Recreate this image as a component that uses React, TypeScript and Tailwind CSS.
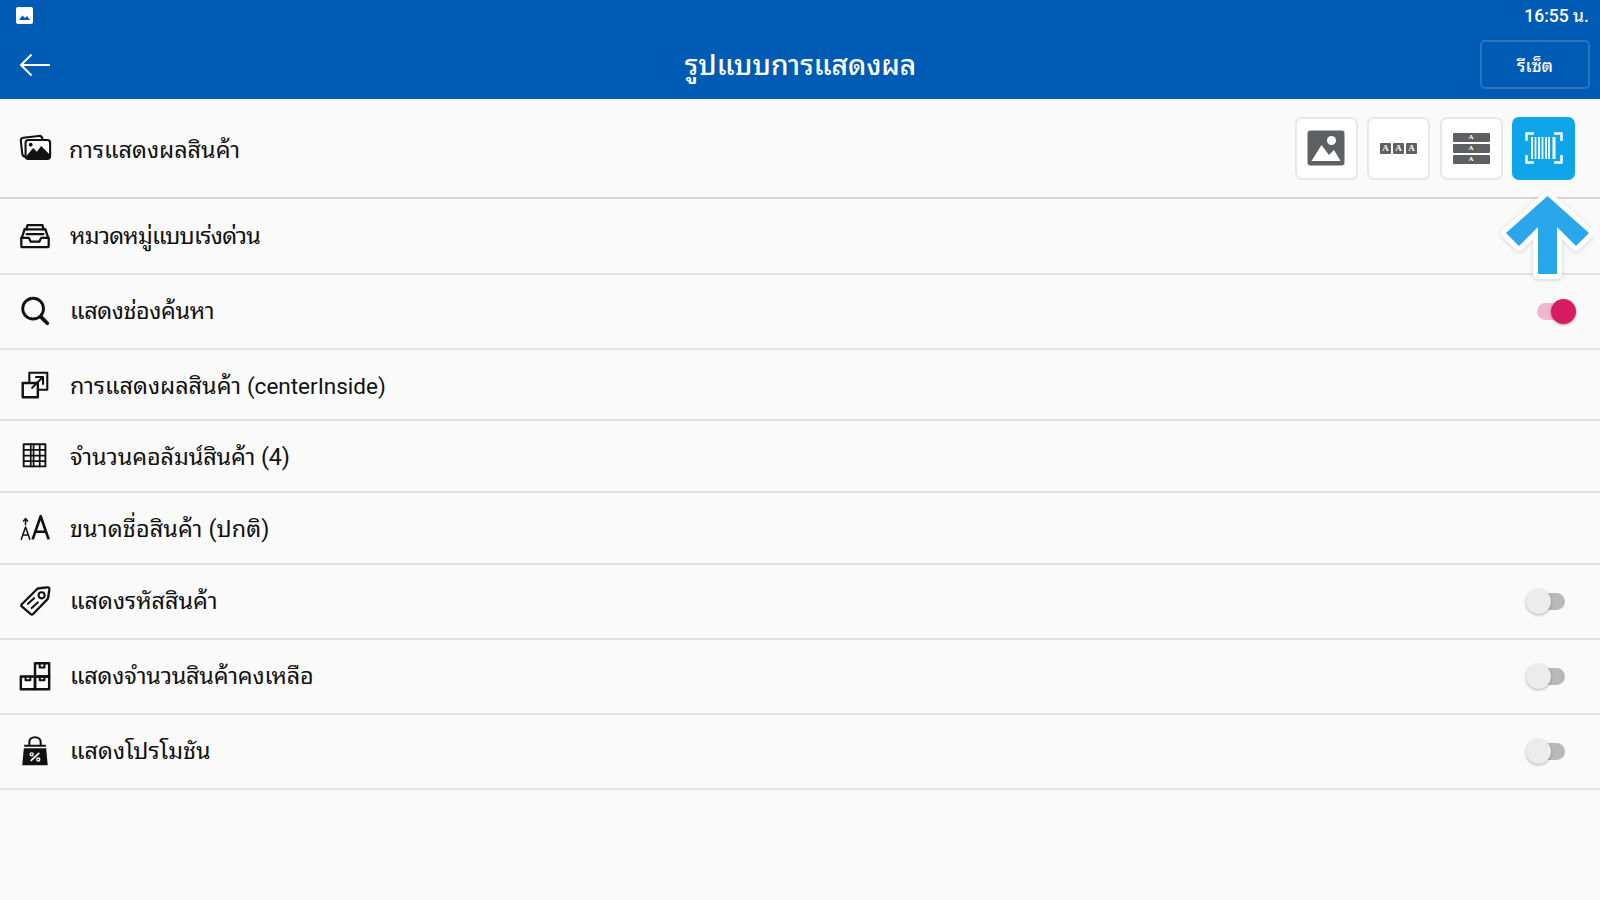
import { ReactNode } from "react";

const Ink = ({ children }: { children: ReactNode }) => (
  <svg className="mx-[1px]" width="34" height="34" viewBox="0 0 36 36" fill="none" stroke="#111" strokeWidth="2.2" strokeLinejoin="round" strokeLinecap="round">
    {children}
  </svg>
);

const GalleryIcon = () => (
  <Ink>
    <path d="M7.5 27.5 C5.5 27 4.8 26 4.5 24 L3 10.5 C2.8 8.5 3.8 7.4 5.5 7.2 L22 5.2 C24.5 5 25.5 6 26 8.5" />
    <rect x="8" y="9.5" width="26" height="20" rx="3" fill="#fafafa" />
    <path d="M8.5 27 L16 18 L20 22 L24.5 16 L33.5 25 V27 C33.5 28.5 32.5 30 31 30 H11 C9.5 30 8.5 28.5 8.5 27 Z" fill="#111" stroke="none" />
    <circle cx="13.5" cy="14.5" r="2" fill="#111" stroke="none" />
  </Ink>
);

const TrayIcon = () => (
  <Ink>
    <path d="M9 11 L10 6.5 H26 L27 11" strokeWidth="2.4" />
    <path d="M7 11 H29" strokeWidth="2.4" />
    <path d="M4 20 L7 11 M32 20 L29 11" strokeWidth="2.4" />
    <path d="M9 16 H27" strokeWidth="2.2" />
    <path d="M3.5 20 H11.5 L13.5 24 H22.5 L24.5 20 H32.5 V28 C32.5 29 31.8 29.8 31 29.8 H5 C4.2 29.8 3.5 29 3.5 28 Z" strokeWidth="2.4" />
  </Ink>
);

const SearchIcon = () => (
  <Ink>
    <circle cx="16" cy="15.5" r="11" strokeWidth="3" />
    <path d="M24 24 L31 31" strokeWidth="4" />
  </Ink>
);

const ResizeIcon = () => (
  <Ink>
    <path d="M12 17 V6 H31 V24 H21" strokeWidth="2.2" strokeLinecap="butt" />
    <rect x="5" y="17" width="16" height="15" strokeWidth="2.6" />
    <path d="M15 22 L26 11 M19 10.5 H26.5 V18" strokeWidth="2.2" />
  </Ink>
);

const GridIcon = () => (
  <Ink>
    <rect x="6" y="5.5" width="23" height="23.5" strokeWidth="2" />
    <path d="M13.5 5.5 V29 M16.5 5.5 V29 M23 5.5 V29 M6 11.5 H29 M6 17.5 H29 M6 23.5 H29" strokeWidth="1.8" />
  </Ink>
);

const FontSizeIcon = () => (
  <Ink>
    <path d="M3.5 30 L8 17 L12.5 30 M5 25.5 H11" strokeWidth="1.6" />
    <path d="M8 14.5 V8.5 M5.8 10.5 L8 8 L10.2 10.5" strokeWidth="1.6" />
    <path d="M15.5 30 L24 5.5 L32.5 30 M18.5 22 H29.5" strokeWidth="2.8" strokeLinecap="butt" />
  </Ink>
);

const TagIcon = () => (
  <Ink>
    <path d="M4 21.5 L20 5.5 C20.8 4.8 21.5 4.5 22.5 4.5 L31 3.5 C32.5 3.3 33.3 4 33.2 5.5 L32 14 C31.9 15 31.6 15.6 31 16.3 L16 31.8 C15.2 32.6 14.3 32.6 13.5 31.8 L4 23.8 C3.3 23.1 3.3 22.2 4 21.5 Z" strokeWidth="2.4" />
    <circle cx="25" cy="12" r="3.2" strokeWidth="2.2" />
    <path d="M10.5 21 L17 15 M14.5 25.5 L21 19.5" strokeWidth="2.2" />
  </Ink>
);

const BoxesIcon = () => (
  <Ink>
    <rect x="3" y="18.5" width="15" height="13.5" strokeWidth="2.6" />
    <rect x="18" y="18.5" width="15" height="13.5" strokeWidth="2.6" />
    <rect x="18" y="4.5" width="15" height="14" strokeWidth="2.6" />
    <path d="M8 18.5 V22.5 H13 V18.5 M23 18.5 V22.5 H28 V18.5 M23 4.5 V9 H28 V4.5" strokeWidth="2.2" />
  </Ink>
);

const PromoBagIcon = () => (
  <Ink>
    <path d="M12 12 V8.5 C12 5.5 14.5 3.5 18 3.5 C21.5 3.5 24 5.5 24 8.5 V12" strokeWidth="2.2" />
    <path d="M6.5 11.5 H29.5 V13.5 H6.5 Z M6.2 15 H29.8 L31.5 33 H4.5 Z" fill="#111" stroke="none" />
    <path d="M14 28 L22 20.5" stroke="#fff" strokeWidth="1.8" />
    <circle cx="14.5" cy="21.5" r="1.6" stroke="#fff" strokeWidth="1.4" />
    <circle cx="21.5" cy="27" r="1.6" stroke="#fff" strokeWidth="1.4" />
  </Ink>
);

const Toggle = ({ on }: { on?: boolean }) =>
  on ? (
    <div className="relative h-[17px] w-[38px] rounded-full bg-[#f0b6cb]">
      <div className="absolute right-[-1px] top-[-4px] h-[25px] w-[25px] rounded-full bg-[#d81b60] shadow-[0_1px_3px_rgba(0,0,0,0.35)]" />
    </div>
  ) : (
    <div className="relative mr-[10px] h-[17px] w-[38px] rounded-full bg-[#b9b9b9]">
      <div className="absolute left-[-1px] top-[-4px] h-[25px] w-[25px] rounded-full bg-[#ececec] shadow-[0_1px_3px_rgba(0,0,0,0.3)]" />
    </div>
  );

const ViewButton = ({ active, children }: { active?: boolean; children: ReactNode }) => (
  <div
    className={
      active
        ? "flex h-[63px] w-[63px] items-center justify-center rounded-[7px] bg-[#0ea5ea]"
        : "flex h-[63px] w-[63px] items-center justify-center rounded-[7px] border-2 border-[#e8e8e8] bg-white"
    }
  >
    {children}
  </div>
);

const ViewIcons = () => (
  <div className="flex gap-[9.5px]">
    <ViewButton>
      <svg width="38" height="36" viewBox="0 0 38 36">
        <rect x="0.5" y="0.5" width="37" height="35" rx="3" fill="#5f6064" />
        <circle cx="24.5" cy="10.5" r="4.5" fill="#fff" />
        <path d="M4.5 31 L14.5 15 L22 25 L27 20 L33.5 31 Z" fill="#fff" />
      </svg>
    </ViewButton>
    <ViewButton>
      <div className="flex gap-[1.5px]">
        {[0, 1, 2].map((i) => (
          <div key={i} className="flex h-[11px] w-[11.5px] items-center justify-center rounded-[1px] bg-[#5f6064] font-['Liberation_Serif',serif] text-[9px] font-bold leading-none text-white">
            A
          </div>
        ))}
      </div>
    </ViewButton>
    <ViewButton>
      <div className="flex flex-col gap-[2px]">
        {[0, 1, 2].map((i) => (
          <div key={i} className="flex h-[9px] w-[37px] items-center justify-center rounded-[1px] bg-[#5f6064] font-['Liberation_Serif',serif] text-[7px] font-bold leading-none text-white">
            A
          </div>
        ))}
      </div>
    </ViewButton>
    <ViewButton active>
      <svg width="38" height="32" viewBox="0 0 38 32" fill="none" stroke="#fff">
        <path d="M1.5 9 V1.5 H9 M29 1.5 H36.5 V9 M1.5 23 V30.5 H9 M29 30.5 H36.5 V23" strokeWidth="2.4" />
        <path d="M7 5 V27 M10.5 5 V27 M14 5 V27 M17.5 5 V27 M21 5 V27 M24 5 V27" strokeWidth="1.8" />
        <path d="M29 5 V27" strokeWidth="3" />
      </svg>
    </ViewButton>
  </div>
);

const rows: { icon: ReactNode; label: ReactNode; key: string; h: string; text: string; right?: ReactNode }[] = [
  { key: "category", icon: <TrayIcon />, label: "หมวดหมู่แบบเร่งด่วน", h: "h-[76px]", text: "pt-[1px] tracking-[-0.8px]" },
  { key: "search", icon: <SearchIcon />, label: "แสดงช่องค้นหา", h: "h-[75px]", text: "pt-[1px] tracking-[-0.4px]", right: <Toggle on /> },
  {
    key: "scale",
    icon: <ResizeIcon />,
    label: (
      <>
        การแสดงผลสินค้า <span className="text-[22.5px]">(centerInside)</span>
      </>
    ),
    h: "h-[71px]",
    text: "pt-[4px]",
  },
  { key: "columns", icon: <GridIcon />, label: "จำนวนคอลัมน์สินค้า (4)", h: "h-[72px]", text: "pt-[4px] tracking-[-0.1px]" },
  { key: "size", icon: <FontSizeIcon />, label: "ขนาดชื่อสินค้า (ปกติ)", h: "h-[72px]", text: "pt-[3px] tracking-[0.1px]" },
  { key: "code", icon: <TagIcon />, label: "แสดงรหัสสินค้า", h: "h-[75px]", text: "pt-[1px]", right: <Toggle /> },
  { key: "stock", icon: <BoxesIcon />, label: "แสดงจำนวนสินค้าคงเหลือ", h: "h-[75px]", text: "pt-[1px] tracking-[-0.2px]", right: <Toggle /> },
  { key: "promo", icon: <PromoBagIcon />, label: "แสดงโปรโมชัน", h: "h-[75px]", text: "pt-0", right: <Toggle /> },
];

export default function App() {
  return (
    <div className="relative h-[900px] w-[1600px] overflow-hidden bg-[#fafafa] font-['Roboto','Noto_Sans_Thai_Looped','Noto_Sans_Thai_UI','Noto_Sans','Noto_Sans_Thai',sans-serif] text-[#111]">
      <div className="h-[99px] bg-[#005bb5] text-white">
        <div className="flex h-[30px] items-center justify-between pl-[16px] pr-[11px]">
          <svg width="17" height="17" viewBox="0 0 17 17">
            <rect width="17" height="17" rx="2" fill="#fff" />
            <path d="M3 13 L6.5 8.5 L9 11 L11 9 L14 13 Z" fill="#005bb5" />
          </svg>
          <span className="pt-[3px] text-[17.5px] font-medium">16:55 น.</span>
        </div>
        <div className="grid h-[69px] grid-cols-[1fr_auto_1fr] items-center pl-[19px] pr-[10px]">
          <svg width="32" height="24" viewBox="0 0 32 24" fill="none" stroke="#fff" strokeWidth="2">
            <path d="M31 12 H2 M12.5 1.5 L2 12 L12.5 22.5" />
          </svg>
          <h1 className="-translate-x-[4px] pt-[3px] text-[28.2px] font-medium">รูปแบบการแสดงผล</h1>
          <div className="flex justify-end">
            <button className="flex h-[49px] w-[110px] items-center justify-center rounded-[5px] border-2 border-[#2c74bf] pt-[4px] text-[17.5px] font-medium">
              รีเซ็ต
            </button>
          </div>
        </div>
      </div>

      <div className="flex h-[100px] items-center justify-between border-b-2 border-[#d6d6d6] pl-[17px] pr-[25px]">
        <div className="flex items-center gap-[16px]">
          <GalleryIcon />
          <span className="pt-[5px] text-[23.4px]">การแสดงผลสินค้า</span>
        </div>
        <ViewIcons />
      </div>

      {rows.map((row) => (
        <div key={row.key} className={`flex ${row.h} items-center justify-between border-b-2 border-[#e2e2e2] pl-[17px] pr-[25px]`}>
          <div className="flex items-center gap-[17px]">
            {row.icon}
            <span className={`${row.text} text-[23.4px]`}>{row.label}</span>
          </div>
          {row.right}
        </div>
      ))}

      <svg className="absolute left-[1496px] top-[188px]" width="98" height="94" viewBox="0 0 98 94">
        <path
          d="M51.5 8 L93 45 L80 58 L61 39 V86 H42 V39 L23 58 L10 45 Z"
          fill="#2aa7ea"
          stroke="#fff"
          strokeWidth="10"
          strokeLinejoin="round"
          paintOrder="stroke"
          className="drop-shadow-[0_1px_2px_rgba(0,0,0,0.15)]"
        />
      </svg>
    </div>
  );
}
